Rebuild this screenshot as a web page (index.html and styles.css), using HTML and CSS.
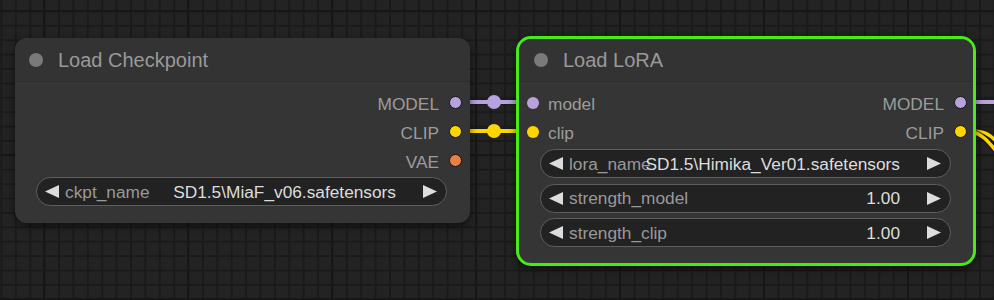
FILE: index.html
```html
<!DOCTYPE html>
<html>
<head>
<meta charset="utf-8">
<link rel="stylesheet" href="styles.css">
</head>
<body>
<div class="canvas">
  <svg class="wires" width="994" height="300" viewBox="0 0 994 300">
    <line x1="468" y1="102" x2="522" y2="102" stroke="#111" stroke-opacity="0.5" stroke-width="6"/>
    <line x1="468" y1="102" x2="522" y2="102" stroke="#b8a2de" stroke-width="4"/>
    <circle cx="494" cy="102" r="7" fill="#b8a2de"/>
    <line x1="468" y1="131" x2="522" y2="131" stroke="#111" stroke-opacity="0.5" stroke-width="6"/>
    <line x1="468" y1="131" x2="522" y2="131" stroke="#ffd500" stroke-width="4"/>
    <circle cx="494" cy="131" r="7" fill="#ffd500"/>
    <line x1="972" y1="102" x2="994" y2="102" stroke="#111" stroke-opacity="0.5" stroke-width="6"/>
    <line x1="972" y1="102" x2="994" y2="102" stroke="#b8a2de" stroke-width="4"/>
    <path d="M972 131 C984 131 989 134 996 141" fill="none" stroke="#111" stroke-opacity="0.6" stroke-width="6"/>
    <path d="M972 131 C984 131 989 134 996 141" fill="none" stroke="#ffd500" stroke-width="3.5"/>
    <path d="M972 132 C982 134 988 141 996 151" fill="none" stroke="#111" stroke-opacity="0.6" stroke-width="6"/>
    <path d="M972 132 C982 134 988 141 996 151" fill="none" stroke="#ffd500" stroke-width="3.5"/>
  </svg>

  <div class="node ckpt">
    <div class="title"><span class="tdot"></span><span class="ttext">Load Checkpoint</span></div>
    <div class="nbody">
      <div class="slots">
        <div class="col ins"></div>
        <div class="col outs">
          <div class="slot out"><span class="slabel">MODEL</span><i class="dot model"></i></div>
          <div class="slot out"><span class="slabel">CLIP</span><i class="dot clip"></i></div>
          <div class="slot out"><span class="slabel">VAE</span><i class="dot vae"></i></div>
        </div>
      </div>
      <div class="widgets">
        <div class="widget">
          <svg class="arr" width="14" height="13" viewBox="0 0 14 13"><polygon points="14,0 14,13 0,6.5" fill="#ddd"/></svg>
          <div class="wtext"><span class="wlabel">ckpt_name</span><span class="wval">SD1.5\MiaF_v06.safetensors</span></div>
          <svg class="arr" width="14" height="13" viewBox="0 0 14 13"><polygon points="0,0 0,13 14,6.5" fill="#ddd"/></svg>
        </div>
      </div>
    </div>
  </div>

  <div class="node lora">
    <div class="title"><span class="tdot"></span><span class="ttext">Load LoRA</span></div>
    <div class="nbody">
      <div class="slots">
        <div class="col ins">
          <div class="slot in"><i class="dot model"></i><span class="slabel">model</span></div>
          <div class="slot in"><i class="dot clip"></i><span class="slabel">clip</span></div>
        </div>
        <div class="col outs">
          <div class="slot out"><span class="slabel">MODEL</span><i class="dot model"></i></div>
          <div class="slot out"><span class="slabel">CLIP</span><i class="dot clip"></i></div>
        </div>
      </div>
      <div class="widgets">
        <div class="widget">
          <svg class="arr" width="14" height="13" viewBox="0 0 14 13"><polygon points="14,0 14,13 0,6.5" fill="#ddd"/></svg>
          <div class="wtext"><span class="wlabel">lora_name</span><span class="wval">SD1.5\Himika_Ver01.safetensors</span></div>
          <svg class="arr" width="14" height="13" viewBox="0 0 14 13"><polygon points="0,0 0,13 14,6.5" fill="#ddd"/></svg>
        </div>
        <div class="widget">
          <svg class="arr" width="14" height="13" viewBox="0 0 14 13"><polygon points="14,0 14,13 0,6.5" fill="#ddd"/></svg>
          <div class="wtext"><span class="wlabel">strength_model</span><span class="wval">1.00</span></div>
          <svg class="arr" width="14" height="13" viewBox="0 0 14 13"><polygon points="0,0 0,13 14,6.5" fill="#ddd"/></svg>
        </div>
        <div class="widget">
          <svg class="arr" width="14" height="13" viewBox="0 0 14 13"><polygon points="14,0 14,13 0,6.5" fill="#ddd"/></svg>
          <div class="wtext"><span class="wlabel">strength_clip</span><span class="wval">1.00</span></div>
          <svg class="arr" width="14" height="13" viewBox="0 0 14 13"><polygon points="0,0 0,13 14,6.5" fill="#ddd"/></svg>
        </div>
      </div>
    </div>
  </div>
</div>
</body>
</html>
```

FILE: styles.css
```css
html, body {
  margin: 0;
  padding: 0;
}
body {
  width: 994px;
  height: 300px;
  overflow: hidden;
  background: #222;
  font-family: "Liberation Sans", Arial, sans-serif;
}
.canvas {
  position: relative;
  width: 994px;
  height: 300px;
  background-color: #232323;
  background-image:
    linear-gradient(to right, #171717 2px, transparent 2px),
    linear-gradient(to bottom, #171717 2px, transparent 2px),
    linear-gradient(to right, #1a1a1a 1.5px, transparent 1.5px),
    linear-gradient(to bottom, #1a1a1a 1.5px, transparent 1.5px);
  background-size: 144px 144px, 144px 144px, 14.4px 14.4px, 14.4px 14.4px;
  background-position: 43px 0, 0 10px, 0.5px 0, 0 10.5px;
}
.wires {
  position: absolute;
  left: 0;
  top: 0;
}
.node {
  position: absolute;
  background: #353535;
  border-radius: 12px;
  box-shadow: 0 3px 8px rgba(0, 0, 0, 0.55);
  display: flex;
  flex-direction: column;
  box-sizing: border-box;
}
.ckpt {
  left: 15px;
  top: 38px;
  width: 455px;
  height: 185px;
}
.lora {
  left: 516px;
  top: 36px;
  width: 460px;
  height: 230px;
  border: 3px solid #44ee15;
  border-radius: 15px;
}
.title {
  height: 44px;
  display: flex;
  align-items: center;
  padding-left: 14px;
  background: #333;
  border-radius: 12px 12px 0 0;
  border-bottom: 1px solid rgba(0, 0, 0, 0.12);
  box-sizing: border-box;
}
.lora .title {
  height: 43px;
  padding-left: 15px;
}
.tdot {
  width: 14px;
  height: 14px;
  border-radius: 50%;
  background: #7a7a7a;
  margin-right: 15px;
  flex: none;
}
.ttext {
  color: #999;
  font-size: 20px;
  padding-top: 1px;
}
.nbody {
  padding-top: 6px;
}
.slots {
  display: flex;
  justify-content: space-between;
}
.col {
  display: flex;
  flex-direction: column;
}
.outs {
  align-items: flex-end;
}
.ins {
  align-items: flex-start;
}
.slot {
  height: 29px;
  display: flex;
  align-items: center;
  font-size: 17.3px;
  color: #9c9c9c;
}
.slabel {
  padding-top: 3px;
}
.ckpt .outs {
  padding-right: 8px;
}
.lora .outs {
  padding-right: 6px;
}
.lora .ins {
  padding-left: 8px;
}
.dot {
  display: block;
  width: 12px;
  height: 12px;
  border-radius: 50%;
  flex: none;
  box-sizing: border-box;
}
.out .dot {
  margin-left: 10px;
  border: 1.5px solid #151515;
  width: 13px;
  height: 13px;
}
.in .dot {
  margin-right: 9px;
}
.model { background: #b8a2de; }
.clip { background: #ffd500; }
.vae { background: #e5804a; }

.widgets {
  display: flex;
  flex-direction: column;
  gap: 5.5px;
  padding-left: 21px;
  margin-top: 2px;
}
.lora .widgets {
  margin-top: 3px;
}
.widget {
  width: 411px;
  height: 29px;
  box-sizing: border-box;
  border: 1px solid #5e5e5e;
  border-radius: 15px;
  background: #222;
  display: flex;
  align-items: center;
  padding: 0 9px 0 8px;
}
.arr {
  flex: none;
  display: block;
}
.wtext {
  flex: 1;
  display: grid;
  margin: 0 27px 0 6px;
  font-size: 17.3px;
  padding-top: 1px;
}
.wlabel {
  grid-area: 1 / 1;
  justify-self: start;
  color: #999;
  white-space: nowrap;
}
.wval {
  grid-area: 1 / 1;
  justify-self: end;
  color: #ddd;
  white-space: nowrap;
}
```
